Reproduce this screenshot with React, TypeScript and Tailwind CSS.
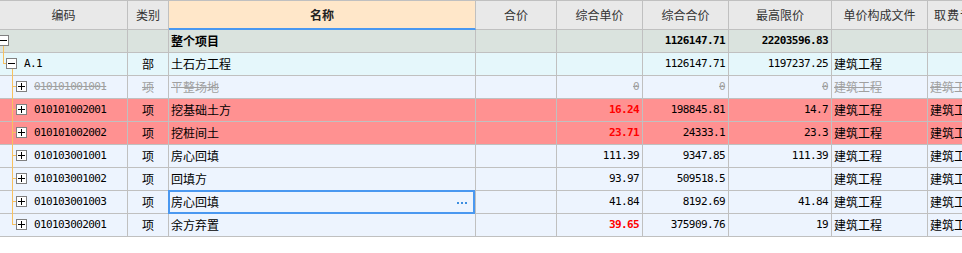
import React from "react";

const CJK = "font-['Noto_Sans_CJK_SC','Noto_Sans',sans-serif]";
const MONO = "font-['DejaVu_Sans_Mono',monospace] text-[11px] tracking-[-0.6px]";

type Row = {
  level: 0 | 1 | 2;
  last?: boolean;
  code: string;
  cat: string;
  name: string;
  hj?: string;
  zhdj?: string;
  zhhj?: string;
  zgxj?: string;
  file?: string;
  qf?: string;
  bg: string;
  bold?: boolean;
  red?: boolean;
  strike?: boolean;
  selected?: boolean;
};

const rows: Row[] = [
  { level: 0, code: "", cat: "", name: "整个项目", zhhj: "1126147.71", zgxj: "22203596.83", bg: "bg-[#dae3de]", bold: true },
  { level: 1, code: "A.1", cat: "部", name: "土石方工程", zhhj: "1126147.71", zgxj: "1197237.25", file: "建筑工程", bg: "bg-[#e5f7fb]" },
  { level: 2, code: "010101001001", cat: "项", name: "平整场地", zhdj: "0", zhhj: "0", zgxj: "0", file: "建筑工程", qf: "建筑工程", bg: "bg-[#edf4fe]", strike: true },
  { level: 2, code: "010101002001", cat: "项", name: "挖基础土方", zhdj: "16.24", zhhj: "198845.81", zgxj: "14.7", file: "建筑工程", qf: "建筑工程", bg: "bg-[#ff9191]", red: true },
  { level: 2, code: "010101002002", cat: "项", name: "挖桩间土", zhdj: "23.71", zhhj: "24333.1", zgxj: "23.3", file: "建筑工程", qf: "建筑工程", bg: "bg-[#ff9191]", red: true },
  { level: 2, code: "010103001001", cat: "项", name: "房心回填", zhdj: "111.39", zhhj: "9347.85", zgxj: "111.39", file: "建筑工程", qf: "建筑工程", bg: "bg-[#edf4fe]" },
  { level: 2, code: "010103001002", cat: "项", name: "回填方", zhdj: "93.97", zhhj: "509518.5", zgxj: "", file: "建筑工程", qf: "建筑工程", bg: "bg-[#edf4fe]" },
  { level: 2, code: "010103001003", cat: "项", name: "房心回填", zhdj: "41.84", zhhj: "8192.69", zgxj: "41.84", file: "建筑工程", qf: "建筑工程", bg: "bg-[#edf4fe]", selected: true },
  { level: 2, last: true, code: "010103002001", cat: "项", name: "余方弃置", zhdj: "39.65", zhhj: "375909.76", zgxj: "19", file: "建筑工程", qf: "建筑工程", bg: "bg-[#edf4fe]", red: true },
];

function Box({ plus, className }: { plus: boolean; className: string }) {
  return (
    <div className={`absolute w-[11px] h-[11px] border border-[#808080] bg-white ${className}`}>
      <div className="absolute left-[1px] top-[4px] w-[7px] h-px bg-black" />
      {plus && <div className="absolute left-[4px] top-[1px] w-px h-[7px] bg-black" />}
    </div>
  );
}

const LINE = "absolute bg-[#f8c15f]";

function TreeCell({ r }: { r: Row }) {
  const textColor = r.strike ? "text-[#a0a0a0] line-through" : "text-black";
  return (
    <div className={`relative w-[128px] shrink-0 h-full border-r border-b border-[#c0c0c0] flex items-center ${MONO} ${textColor}`}>
      {r.level === 0 && (
        <>
          <Box plus={false} className="left-[-2px] top-[5px]" />
          <div className={`${LINE} left-[3px] top-[16px] bottom-[-1px] w-px`} />
        </>
      )}
      {r.level === 1 && (
        <>
          <div className={`${LINE} left-[3px] top-0 h-[11px] w-px`} />
          <div className={`${LINE} left-[3px] top-[10px] w-[4px] h-px`} />
          <Box plus={false} className="left-[6px] top-[5px]" />
          <div className={`${LINE} left-[12px] top-[16px] bottom-[-1px] w-px`} />
          <span className="pl-[24px]">{r.code}</span>
        </>
      )}
      {r.level === 2 && (
        <>
          <div className={`${LINE} left-[12px] top-[-1px] w-px ${r.last ? "h-[12px]" : "bottom-[-1px]"}`} />
          <div className={`${LINE} left-[12px] top-[10px] w-[5px] h-px`} />
          <Box plus={true} className="left-[16px] top-[5px]" />
          <span className="pl-[34px]">{r.code}</span>
        </>
      )}
    </div>
  );
}

function NumCell({ w, v, r, redBold }: { w: string; v?: string; r: Row; redBold?: boolean }) {
  let color = "text-black";
  if (r.strike) color = "text-[#a0a0a0] line-through";
  const bold = r.bold || redBold ? "font-bold" : "";
  const red = redBold ? "text-[#ff0000]" : color;
  return (
    <div className={`${w} shrink-0 h-full border-r border-b border-[#c0c0c0] flex items-center justify-end pr-[3px] ${MONO} ${red} ${bold}`}>
      {v}
    </div>
  );
}

function TextCell({ w, v, r, center }: { w: string; v?: string; r: Row; center?: boolean }) {
  const color = r.strike ? "text-[#a0a0a0] line-through" : "text-black";
  return (
    <div className={`${w} shrink-0 h-full border-r border-b border-[#c0c0c0] flex items-center ${center ? "justify-center" : "pl-[2px]"} ${CJK} text-[12px] ${color} whitespace-nowrap overflow-hidden`}>
      {v}
    </div>
  );
}

const headers: { label: string; w: string; special?: boolean; left?: boolean }[] = [
  { label: "编码", w: "w-[128px]" },
  { label: "类别", w: "w-[41px]" },
  { label: "名称", w: "w-[307px]", special: true },
  { label: "合价", w: "w-[81px]" },
  { label: "综合单价", w: "w-[86px]" },
  { label: "综合合价", w: "w-[86px]" },
  { label: "最高限价", w: "w-[103px]" },
  { label: "单价构成文件", w: "w-[96px]" },
  { label: "取费专业", w: "w-[100px]", left: true },
];

export default function App() {
  return (
    <div className="w-[962px] h-[253px] bg-white overflow-hidden">
      <div className="w-[1100px] border-t border-[#c0c0c0]">
        <div className="flex h-[29px]">
          {headers.map((h) => (
            <div
              key={h.label}
              className={`${h.w} shrink-0 h-full border-r border-[#c0c0c0] flex items-center ${h.left ? "pl-[6px] tracking-[1px]" : "justify-center"} ${CJK} text-[12px] whitespace-nowrap ${
                h.special
                  ? "bg-[#ffe7c9] border-b-2 border-b-[#4a98f0] font-bold text-[#222]"
                  : "bg-[#e9e9e9] border-b text-[#333]"
              }`}
            >
              {h.label}
            </div>
          ))}
        </div>
        {rows.map((r, i) => (
          <div key={i} className={`flex h-[23px] ${r.bg}`}>
            <TreeCell r={r} />
            <TextCell w="w-[41px]" v={r.cat} r={r} center />
            <div className={`relative w-[307px] shrink-0 h-full border-r border-b border-[#c0c0c0] flex items-center justify-between pl-[2px] pr-[8px] ${CJK} text-[12px] ${r.strike ? "text-[#a0a0a0] line-through" : "text-black"} ${r.bold ? "font-bold" : ""}`}>
              <span>{r.name}</span>
              {r.selected && (
                <>
                  <div className="absolute -top-px -left-px right-0 -bottom-px border-2 border-[#4a98f0]" />
                  <div className="flex gap-[2px] mt-[2px]">
                    <span className="w-[2px] h-[2px] bg-[#3d8ee0]" />
                    <span className="w-[2px] h-[2px] bg-[#3d8ee0]" />
                    <span className="w-[2px] h-[2px] bg-[#3d8ee0]" />
                  </div>
                </>
              )}
            </div>
            <NumCell w="w-[81px]" v={r.hj} r={r} />
            <NumCell w="w-[86px]" v={r.zhdj} r={r} redBold={r.red} />
            <NumCell w="w-[86px]" v={r.zhhj} r={r} />
            <NumCell w="w-[103px]" v={r.zgxj} r={r} />
            <TextCell w="w-[96px]" v={r.file} r={r} />
            <TextCell w="w-[100px]" v={r.qf} r={r} />
          </div>
        ))}
      </div>
    </div>
  );
}
